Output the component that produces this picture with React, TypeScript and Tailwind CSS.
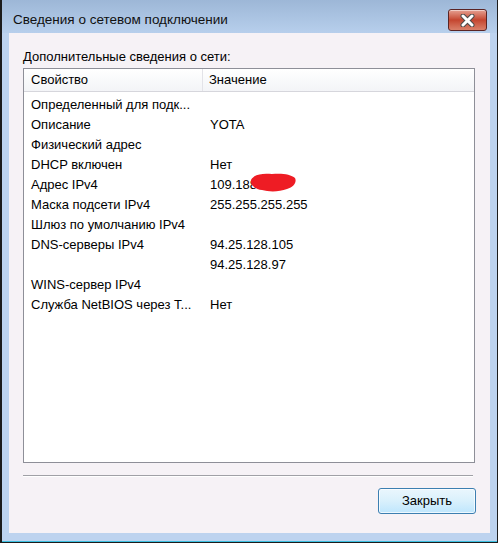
import React from "react";

const rows: { name: string; value: string }[] = [
  { name: "Определенный для подк...", value: "" },
  { name: "Описание", value: "YOTA" },
  { name: "Физический адрес", value: "" },
  { name: "DHCP включен", value: "Нет" },
  { name: "Адрес IPv4", value: "109.188." },
  { name: "Маска подсети IPv4", value: "255.255.255.255" },
  { name: "Шлюз по умолчанию IPv4", value: "" },
  { name: "DNS-серверы IPv4", value: "94.25.128.105" },
  { name: "", value: "94.25.128.97" },
  { name: "WINS-сервер IPv4", value: "" },
  { name: "Служба NetBIOS через Т...", value: "Нет" },
];

function CloseButton() {
  return (
    <div className="mt-[9px] flex h-[22px] w-[39px] items-center justify-center rounded-[3px] border border-[#5a2424] bg-gradient-to-b from-[#e4a092] via-[#c4452f] to-[#d9806a] shadow-[inset_0_1px_0_rgba(255,255,255,0.5)]">
      <svg width="15" height="13" viewBox="0 0 15 13">
        <path d="M3 2 L12 11 M12 2 L3 11" stroke="#4a4a4a" strokeWidth="5" strokeLinecap="round" />
        <path d="M3 2 L12 11 M12 2 L3 11" stroke="#ffffff" strokeWidth="3" strokeLinecap="round" />
      </svg>
    </div>
  );
}

function Scribble() {
  return (
    <svg className="absolute left-[46px] top-[-3px]" width="48" height="21" viewBox="0 0 48 21">
      <path
        d="M2 8 C5 2 14 1 23 2 C32 1 42 2 46 6 C48 10 45 15 38 17 C30 20 20 20 13 18 C6 17 1 13 2 8 Z"
        fill="#ee1c24"
      />
    </svg>
  );
}

export default function App() {
  return (
    <div className="flex h-[543px] w-[500px] bg-white font-['Liberation_Sans',Arial,sans-serif] text-[13px] text-black">
      <div className="flex h-[543px] w-[498px] flex-col border-l-2 border-r border-b border-[#1c1c1c] bg-[#bdd3ef] shadow-[inset_0_-1px_0_#3bbfe0]">
        {/* title bar */}
        <div className="flex h-[33px] shrink-0 justify-between bg-gradient-to-b from-[#9db7d7] to-[#b7cfec] pl-[11px] pr-[10px]">
          <div className="pt-[11px] text-[13.5px] leading-[18px] text-[#111]">Сведения о сетевом подключении</div>
          <CloseButton />
        </div>

        {/* client area */}
        <div className="mx-[7px] flex h-[500px] flex-col bg-[#f6f2f6] px-[14px]">
          <div className="pt-[15px] leading-[18px]">Дополнительные сведения о сети:</div>

          <div className="mt-[2px] h-[395px] w-[452px] border border-[#8e8f98] bg-white">
            <div className="flex h-[23px] border-b border-[#d6d6dc] bg-gradient-to-b from-white to-[#f3f4f7]">
              <div className="flex w-[179px] items-center border-r border-[#e3e3e8] pl-[7px]">Свойство</div>
              <div className="flex items-center pl-[6px]">Значение</div>
            </div>
            <div className="pt-[3px]">
              {rows.map((r, i) => (
                <div key={i} className="flex h-[20px] items-center">
                  <div className="w-[179px] pl-[7px]">{r.name}</div>
                  <div className="relative pl-[7px]">
                    {r.value}
                    {r.value === "109.188." && <Scribble />}
                  </div>
                </div>
              ))}
            </div>
          </div>

          <div className="mt-[12px] h-[2px] w-[450px] border-t border-b border-t-[#a0a0a6] border-b-white" />

          <div className="mt-[11px] flex justify-end">
            <div className="flex h-[26px] w-[98px] items-center justify-center rounded-[3px] border border-[#3c7fb1] bg-gradient-to-b from-[#eaf6fd] via-[#d9f0fc] to-[#bee6fd] shadow-[inset_0_0_0_1px_rgba(255,255,255,0.7)]">
              Закрыть
            </div>
          </div>
        </div>
      </div>
      <div className="flex-1 bg-white" />
    </div>
  );
}
